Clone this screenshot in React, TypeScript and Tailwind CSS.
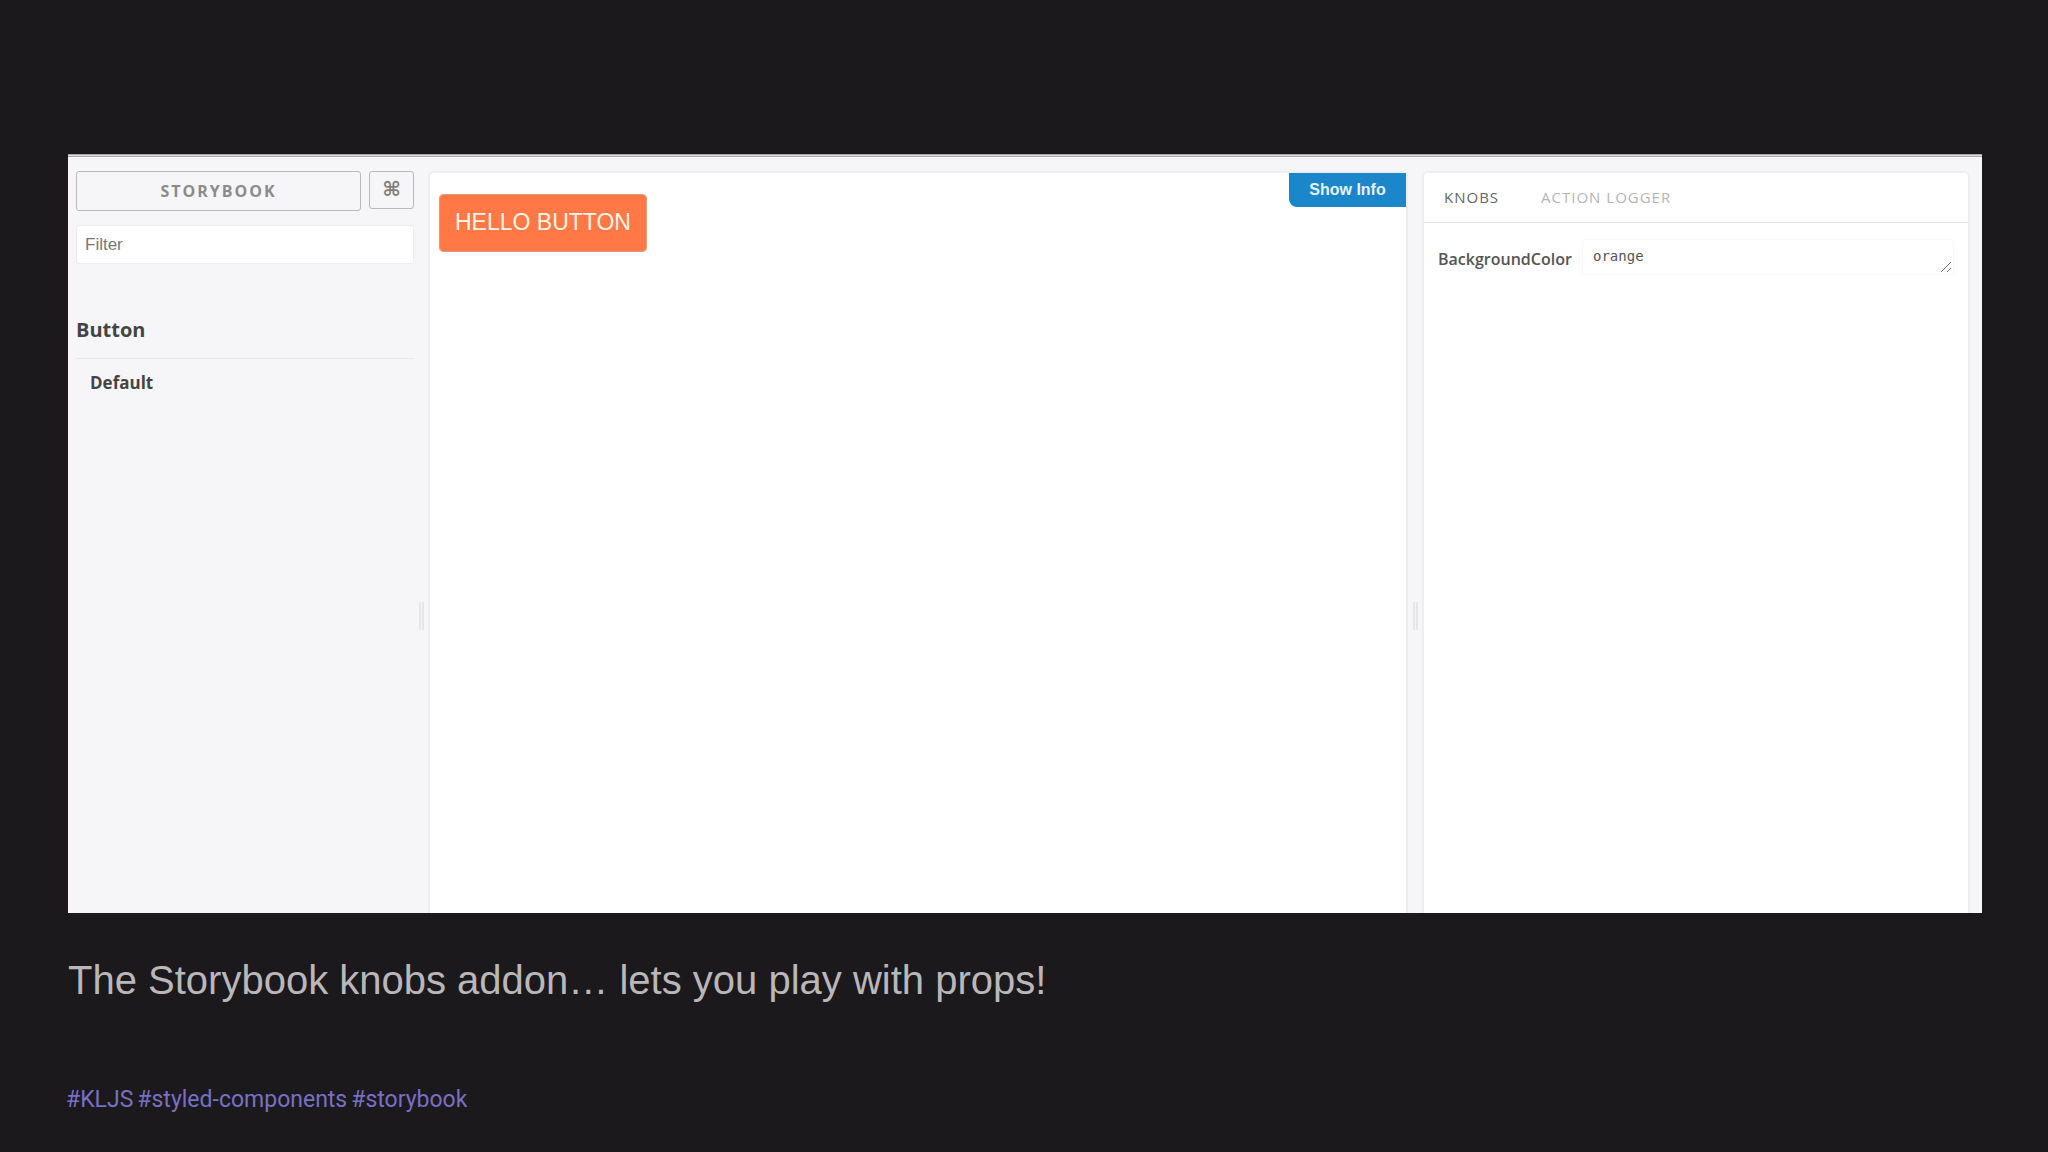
import { useState } from 'react';

const stories = [{ kind: 'Button', items: ['Default'] }];

const tabs = ['KNOBS', 'ACTION LOGGER'];

const tags = ['#KLJS', '#styled-components', '#storybook'];

const Sidebar = () => {
  const [filter, setFilter] = useState('');

  return (
    <aside className="w-[346px] shrink-0 pl-2 pt-3.5">
      <div className="flex items-start gap-2">
        <button className="h-10 flex-1 rounded-[3px] border border-[#bababa] text-base font-bold tracking-[2px] text-[#8b8b8b]">
          STORYBOOK
        </button>
        <button
          aria-label="Shortcuts"
          className="flex h-[38px] w-[45px] items-center justify-center rounded-[3px] border border-[#bababa] pb-0.5 font-['DejaVu_Sans',sans-serif] text-xl font-bold text-[#808080]"
        >
          ⌘
        </button>
      </div>

      <input
        type="text"
        aria-label="Filter"
        placeholder="Filter"
        value={filter}
        onChange={(e) => setFilter(e.target.value)}
        className="mt-3.5 h-[39px] w-full rounded-[3px] border border-[#ececed] bg-white px-2 font-['Liberation_Sans',sans-serif] text-[17px] text-[#444] outline-none placeholder:text-[#777]"
      />

      {/* Story list */}
      <nav className="mt-12">
        {stories.map((story) => (
          <div key={story.kind}>
            <a
              href="#button"
              className="block border-b border-[#e9e9eb] pb-2.5 text-xl leading-9 font-bold text-[#444]"
            >
              {story.kind}
            </a>
            {story.items.map((item) => (
              <a key={item} href="#default" className="block pt-2 pl-3.5 text-[17px] leading-8 font-bold text-[#444]">
                {item}
              </a>
            ))}
          </div>
        ))}
      </nav>
    </aside>
  );
};

const Resizer = () => (
  <div className="flex w-3.5 shrink-0 justify-center pt-[445px]">
    <div className="h-7 w-[5px] border-x-2 border-[#e6e6e8]" />
  </div>
);

const Preview = () => (
  <main className="mt-3.5 flex min-w-0 flex-1 items-start justify-between rounded-t-md border-2 border-b-0 border-[#eeeeef] bg-white">
    <button className="mt-[22px] ml-2.5 h-14 rounded-[3px] bg-[#ff7846] px-[15px] pb-0.5 font-['Liberation_Sans',sans-serif] text-[23px] text-[#fff5e6] outline outline-[#e29a7c]">
      HELLO BUTTON
    </button>
    <button className="h-[34px] w-[117px] rounded-bl-lg bg-[#1c86ca] font-['Liberation_Sans',sans-serif] text-base font-bold text-[#e6f3fc]">
      Show Info
    </button>
  </main>
);

const KnobsPanel = () => {
  const [active, setActive] = useState('KNOBS');
  const [color, setColor] = useState('orange');

  return (
    <section className="mt-3.5 w-[548px] shrink-0 rounded-t-md border-2 border-b-0 border-[#eeeeef] bg-white">
      <div className="flex h-[50px] items-center gap-[42px] border-b border-[#e8e4e6] px-5">
        {tabs.map((tab) => (
          <button
            key={tab}
            onClick={() => setActive(tab)}
            className={`text-[15px] tracking-[1px] ${active === tab ? 'text-[#666]' : 'text-[#b5b5b5]'}`}
          >
            {tab}
          </button>
        ))}
      </div>
      <div className="flex items-start px-3.5 pt-4">
        <label htmlFor="background-color" className="w-36 shrink-0 pt-2 text-base font-semibold text-[#555]">
          BackgroundColor
        </label>
        <div className="relative flex-1">
          <textarea
            id="background-color"
            rows={1}
            value={color}
            onChange={(e) => setColor(e.target.value)}
            className="block h-9 w-full resize-none rounded-[3px] border border-[#faf8f9] bg-white px-2.5 py-1 font-['DejaVu_Sans_Mono',monospace] text-sm leading-6 text-[#555] outline-none"
          />
          <svg
            viewBox="0 0 12 12"
            fill="none"
            stroke="#777"
            className="pointer-events-none absolute right-0.5 bottom-0.5 size-3"
          >
            <path d="M1 11 11 1M7 11l4-4" />
          </svg>
        </div>
      </div>
    </section>
  );
};

export default function App() {
  return (
    <div className="flex min-h-screen flex-col bg-[#1b191b] px-[66px] pt-[154px] pb-9">
      <div className="ml-0.5 flex flex-1 flex-col bg-[#f6f6f8] font-['Open_Sans',sans-serif]">
        <div className="h-[3px] border-y border-[#a9a9ab] bg-[#dddddf]" />
        <div className="flex flex-1 pr-3">
          <Sidebar />
          <Resizer />
          <Preview />
          <Resizer />
          <KnobsPanel />
        </div>
      </div>

      {/* Slide caption */}
      <footer>
        <p className="mt-[43px] ml-0.5 font-['Liberation_Sans',sans-serif] text-[40px] leading-12 text-[#b9b7b9]">
          The Storybook knobs addon… lets you play with props!
        </p>
        <div className="mt-20 flex gap-1 font-['Roboto',sans-serif] text-[23px] leading-8 text-[#7770c4]">
          {tags.map((tag) => (
            <a key={tag} href={tag}>
              {tag}
            </a>
          ))}
        </div>
      </footer>
    </div>
  );
}
